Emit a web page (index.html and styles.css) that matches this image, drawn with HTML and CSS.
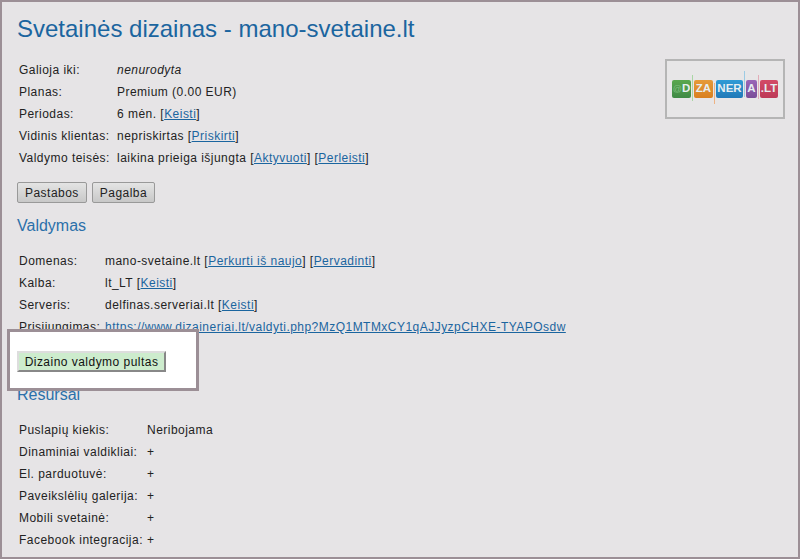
FILE: index.html
```html
<!DOCTYPE html>
<html lang="en">
<head>
    <meta charset="UTF-8">
    <title>Svetainės dizainas - mano-svetaine.lt</title>
    <link rel="stylesheet" href="styles.css">
</head>
<body>
    <div class="page">
        <div class="logo-box">
            <div class="logo">
                <span class="logo-part green"><span class="at">@</span>D</span>
                <span class="logo-part orange">ZA</span>
                <span class="logo-part blue">NER</span>
                <span class="logo-part purple">A</span>
                <span class="logo-part red">.LT</span>
            </div>
        </div>
        <h1>Svetainės dizainas - mano-svetaine.lt</h1>
        <table class="info info-main">
            <tr><td class="label">Galioja iki:</td><td><em>nenurodyta</em></td></tr>
            <tr><td class="label">Planas:</td><td>Premium (0.00 EUR)</td></tr>
            <tr><td class="label">Periodas:</td><td>6 mėn. [<a href="#">Keisti</a>]</td></tr>
            <tr><td class="label">Vidinis klientas:</td><td>nepriskirtas [<a href="#">Priskirti</a>]</td></tr>
            <tr><td class="label">Valdymo teisės:</td><td>laikina prieiga išjungta [<a href="#">Aktyvuoti</a>] [<a href="#">Perleisti</a>]</td></tr>
        </table>
        <div class="buttons">
            <button type="button">Pastabos</button>
            <button type="button">Pagalba</button>
        </div>
        <h2>Valdymas</h2>
        <table class="info info-manage">
            <tr><td class="label">Domenas:</td><td>mano-svetaine.lt [<a href="#">Perkurti iš naujo</a>] [<a href="#">Pervadinti</a>]</td></tr>
            <tr><td class="label">Kalba:</td><td>lt_LT [<a href="#">Keisti</a>]</td></tr>
            <tr><td class="label">Serveris:</td><td>delfinas.serveriai.lt [<a href="#">Keisti</a>]</td></tr>
            <tr><td class="label">Prisijungimas:</td><td><a href="#">https://www.dizaineriai.lt/valdyti.php?MzQ1MTMxCY1qAJJyzpCHXE-TYAPOsdw</a></td></tr>
        </table>
        <div class="highlight">
            <button type="button" class="green-btn">Dizaino valdymo pultas</button>
        </div>
        <h2 class="resources">Resursai</h2>
        <table class="info info-resources">
            <tr><td class="label">Puslapių kiekis:</td><td>Neribojama</td></tr>
            <tr><td class="label">Dinaminiai valdikliai:</td><td>+</td></tr>
            <tr><td class="label">El. parduotuvė:</td><td>+</td></tr>
            <tr><td class="label">Paveikslėlių galerija:</td><td>+</td></tr>
            <tr><td class="label">Mobili svetainė:</td><td>+</td></tr>
            <tr><td class="label">Facebook integracija:</td><td>+</td></tr>
        </table>
    </div>
</body>
</html>
```

FILE: styles.css
```css
html, body {
    margin: 0;
    height: 100%;
    overflow: hidden;
}
body {
    font-family: "Liberation Sans", Arial, sans-serif;
    font-size: 12px;
    letter-spacing: 0.47px;
    color: #222;
}
.page {
    position: relative;
    box-sizing: border-box;
    height: 559px;
    padding: 0 15px;
    background-color: #e6e4e6;
    border: 2px solid #9c8f96;
    overflow: hidden;
}
h1 {
    margin: 12px 0 15px;
    font-size: 24px;
    line-height: 30px;
    font-weight: normal;
    letter-spacing: 0;
    color: #1b659f;
}
h2 {
    margin: 13px 0 14px;
    font-size: 16px;
    line-height: 20px;
    font-weight: normal;
    letter-spacing: 0;
    color: #2b70aa;
}
.info {
    border-collapse: collapse;
}
.info td {
    height: 22px;
    padding: 0 2px;
    white-space: nowrap;
}
.info .label {
    padding-right: 0;
}
.info-main .label {
    width: 96px;
}
.info-manage .label {
    width: 84px;
}
.info-resources .label {
    width: 126px;
}
a {
    color: #1b659f;
}
.buttons {
    display: flex;
    gap: 5px;
    margin-top: 13px;
}
button {
    height: 21px;
    padding: 0 7px;
    font-family: inherit;
    font-size: 12px;
    letter-spacing: 0.47px;
    color: #222;
    background: linear-gradient(#e4e4e4, #c8c8c8);
    border: 1px solid #999;
    border-radius: 2px;
}
.logo-box {
    position: absolute;
    top: 57px;
    right: 13px;
    box-sizing: border-box;
    width: 120px;
    height: 60px;
    display: flex;
    align-items: center;
    justify-content: center;
    background-color: #e7e6e7;
    border: 2px solid #b5b5b5;
}
.logo {
    display: flex;
    gap: 3px;
    font-size: 11.5px;
    font-weight: bold;
    letter-spacing: 0;
    line-height: 17px;
    color: #e6eef2;
}
.logo-part {
    position: relative;
    display: block;
    box-sizing: border-box;
    text-align: center;
    border-radius: 2px;
}
.logo-part::after {
    content: "";
    position: absolute;
    right: -2px;
    width: 1px;
}
.at {
    font-weight: normal;
    font-size: 9px;
    color: #7fbf7f;
}
.green {
    width: 19px;
    background: linear-gradient(#5aa84f, #3f8a45);
}
.green::after {
    top: -5px;
    height: 26px;
    background-color: #a9d6a4;
}
.orange {
    width: 19px;
    background: linear-gradient(#e59a3a, #d9801f);
}
.orange::after {
    top: 3px;
    height: 21px;
    background-color: #eeb383;
}
.blue {
    width: 27px;
    background: linear-gradient(#2f9bd6, #2079b8);
}
.blue::after {
    top: -9px;
    height: 26px;
    background-color: #9ccbe4;
}
.purple {
    width: 11px;
    background: linear-gradient(#9a66b8, #7a4c98);
}
.purple::after {
    top: -5px;
    height: 24px;
    background-color: #e2adb8;
}
.red {
    width: 18px;
    background: linear-gradient(#d34a66, #bd3a58);
}
.highlight {
    position: absolute;
    top: 327px;
    left: 5px;
    box-sizing: border-box;
    width: 192px;
    height: 62px;
    padding: 19px 7px;
    background-color: #fff;
    border: 3px solid #9c8f96;
}
.green-btn {
    display: block;
    width: 149px;
    color: #111;
    padding: 0;
    background: #cdeccd;
    border-radius: 0;
    border-width: 2px;
    border-style: solid;
    border-color: #ddd #888 #888 #ddd;
}
.resources {
    margin-top: 47px;
}
```
